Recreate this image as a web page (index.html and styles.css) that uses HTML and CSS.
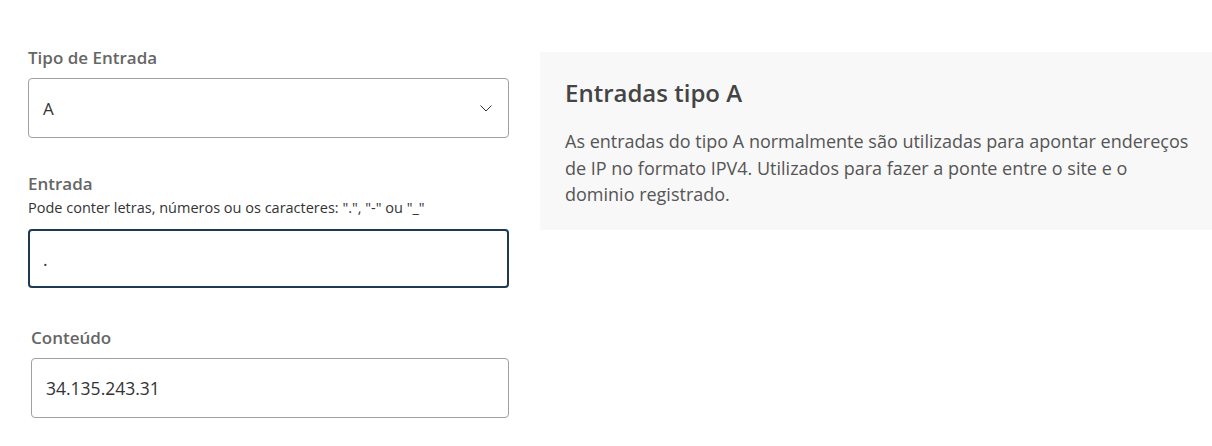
FILE: index.html
```html
<!DOCTYPE html>
<html lang="pt-BR">
<head>
<meta charset="utf-8">
<title>Entradas DNS</title>
<link rel="stylesheet" href="styles.css">
</head>
<body>
<div class="page">
  <form class="form">
    <div class="field">
      <label class="label">Tipo de Entrada</label>
      <div class="select">
        <span class="select-value">A</span>
        <svg class="chevron" width="12" height="7" viewBox="0 0 12 7"><path d="M0.5 0.5 L6 6 L11.5 0.5" fill="none" stroke="#333" stroke-width="1"/></svg>
      </div>
    </div>
    <div class="field field-entrada">
      <label class="label">Entrada</label>
      <div class="hint">Pode conter letras, números ou os caracteres: ".", "-" ou "_"</div>
      <div class="input input-focus">.</div>
    </div>
    <div class="field field-conteudo">
      <label class="label">Conteúdo</label>
      <div class="input">34.135.243.31</div>
    </div>
  </form>
  <aside class="info">
    <h2 class="info-title">Entradas tipo A</h2>
    <p class="info-text">As entradas do tipo A normalmente são utilizadas para apontar endereços de IP no formato IPV4. Utilizados para fazer a ponte entre o site e o dominio registrado.</p>
  </aside>
</div>
</body>
</html>
```

FILE: styles.css
```css
html, body {
  margin: 0;
  padding: 0;
  background: #fff;
}
body {
  font-family: "Open Sans", "Noto Sans", sans-serif;
  color: #333;
}
.page {
  display: flex;
  align-items: flex-start;
  gap: 31px;
  padding: 48px 0 0 28px;
}
.form {
  width: 481px;
  display: flex;
  flex-direction: column;
}
.field {
  display: flex;
  flex-direction: column;
}
.label {
  font-size: 17px;
  font-weight: 600;
  line-height: 20px;
  color: #666;
  margin-bottom: 10px;
}
.field-entrada {
  margin-top: 36px;
}
.field-entrada .label {
  margin-bottom: 5px;
}
.hint {
  font-size: 14.5px;
  line-height: 18px;
  color: #333;
  margin-bottom: 12px;
}
.field-conteudo {
  margin-top: 40px;
  margin-left: 3px;
}
.select {
  box-sizing: border-box;
  height: 60px;
  border: 1px solid #a0a0a0;
  border-radius: 4px;
  display: flex;
  align-items: center;
  justify-content: space-between;
  padding: 0 16px 0 14px;
  font-size: 17px;
  color: #333;
}
.chevron {
  display: block;
}
.input {
  box-sizing: border-box;
  height: 60px;
  border: 1px solid #a0a0a0;
  border-radius: 4px;
  display: flex;
  align-items: center;
  padding: 0 14px;
  font-size: 17.5px;
  color: #333;
}
.input-focus {
  height: 59px;
  border: 2px solid #1d3a52;
  padding-left: 13px;
}
.info {
  flex: 1;
  margin-top: 4px;
  background: #f8f8f8;
  padding: 26px 20px 22px 25px;
}
.info-title {
  margin: 0 0 20px;
  font-size: 24px;
  line-height: 30px;
  font-weight: 600;
  color: #444;
}
.info-text {
  margin: 0;
  font-size: 18px;
  line-height: 26.5px;
  color: #555;
}
```
